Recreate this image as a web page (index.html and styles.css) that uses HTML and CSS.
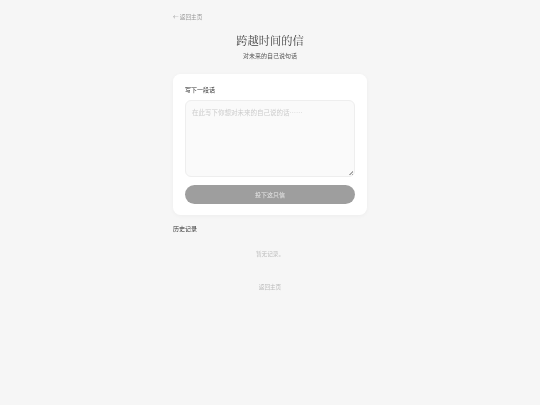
FILE: index.html
```html
<!DOCTYPE html>
<html>
<head>
  <title>跨越时间的信</title>
  <link rel="stylesheet" href="styles.css">
</head>
<body>
  <div class="page">
    <a class="back-link" href="#">← 返回主页</a>

    <div class="header">
      <h1>跨越时间的信</h1>
      <p>对未来的自己说句话</p>
    </div>

    <!-- Letter form -->
    <div class="card">
      <label for="letter">写下一段话</label>
      <textarea id="letter" placeholder="在此写下你想对未来的自己说的话……"></textarea>
      <button type="button" disabled>投下这只信</button>
    </div>

    <!-- History -->
    <h2>历史记录</h2>
    <p class="empty">暂无记录。</p>
    <a class="home-link" href="#">返回主页</a>
  </div>
</body>
</html>
```

FILE: styles.css
```css
body {
  font-family: "Noto Sans CJK SC", sans-serif;
  background-color: #f6f6f6;
  margin: 0;
  color: #333;
}

.page {
  width: 194px;
  margin: 0 auto;
  padding-top: 12px;
  display: flex;
  flex-direction: column;
  will-change: transform;
}

.back-link {
  font-size: 5.625px;
  line-height: 9px;
  color: #999;
  text-decoration: none;
}

.header {
  margin-top: 11px;
  text-align: center;
}

.header h1 {
  margin: 0;
  font-family: "Noto Serif CJK SC", "Noto Sans CJK SC", serif;
  font-size: 11.25px;
  line-height: 17px;
  font-weight: 400;
  color: #444;
}

.header p {
  margin: 1.5px 0 0;
  font-size: 6px;
  line-height: 10px;
  color: #555;
}

.card {
  margin-top: 13.5px;
  padding: 11px 12px 11.5px;
  background-color: #fff;
  border-radius: 7.5px;
  box-shadow: 0 1px 4px rgba(0, 0, 0, 0.04);
  display: flex;
  flex-direction: column;
}

.card label {
  font-size: 6px;
  line-height: 9px;
  color: #333;
}

.card textarea {
  display: block;
  box-sizing: border-box;
  width: 170px;
  height: 77px;
  margin-top: 6px;
  padding: 6px;
  font-family: inherit;
  font-size: 6.5px;
  line-height: 11px;
  background-color: #fafafa;
  border: 1px solid #eee;
  border-radius: 6px;
}

.card textarea::placeholder {
  color: #ccc;
}

.card textarea::-webkit-resizer {
  background: linear-gradient(135deg, transparent 50%, #aaa 50%, #aaa 64%, transparent 64%, transparent 78%, #aaa 78%) no-repeat right 1px bottom 1px / 4px 4px;
}

.card button {
  margin-top: 8px;
  height: 18.5px;
  padding: 0;
  border: none;
  border-radius: 10px;
  background-color: #9e9e9e;
  color: #e8e8e8;
  font-family: inherit;
  font-size: 6px;
}

h2 {
  margin: 9px 0 0;
  font-size: 6px;
  line-height: 10px;
  font-weight: 400;
  color: #333;
}

.empty {
  margin: 14.5px 0 0;
  text-align: center;
  font-size: 5.625px;
  line-height: 9px;
  color: #bbb;
}

.home-link {
  margin-top: 24.5px;
  text-align: center;
  font-size: 5.625px;
  line-height: 9px;
  color: #bbb;
  text-decoration: none;
}
```
